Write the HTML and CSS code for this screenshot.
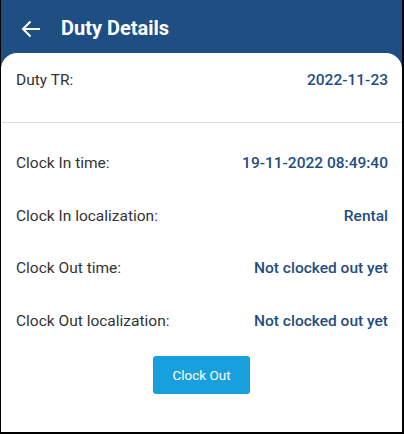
FILE: index.html
```html
<!DOCTYPE html>
<html lang="en">
  <head>
    <meta charset="UTF-8" />
    <meta name="viewport" content="width=device-width, initial-scale=1.0" />
    <title>Duty Details</title>
    <link rel="stylesheet" href="styles.css">
  </head>
  <body>
    <div class="screen">
      <header class="appbar">
        <svg class="back" width="20" height="18" viewBox="0 0 20 18">
          <path d="M19 9H2M9.5 1.5L2 9l7.5 7.5" fill="none" stroke="#fff" stroke-width="2" />
        </svg>
        <h1 class="title">Duty Details</h1>
      </header>
      <main class="card">
        <div class="row row-top">
          <span class="label">Duty TR:</span>
          <span class="value">2022-11-23</span>
        </div>
        <div class="divider"></div>
        <div class="details">
          <div class="row">
            <span class="label">Clock In time:</span>
            <span class="value">19-11-2022 08:49:40</span>
          </div>
          <div class="row">
            <span class="label">Clock In localization:</span>
            <span class="value">Rental</span>
          </div>
          <div class="row">
            <span class="label">Clock Out time:</span>
            <span class="value">Not clocked out yet</span>
          </div>
          <div class="row">
            <span class="label">Clock Out localization:</span>
            <span class="value">Not clocked out yet</span>
          </div>
        </div>
        <div class="actions">
          <button class="btn-clock">Clock Out</button>
        </div>
      </main>
    </div>
  </body>
</html>
```

FILE: styles.css
```css
html,
body {
  margin: 0;
  padding: 0;
  width: 100%;
  height: 100%;
  font-family: Roboto, "Liberation Sans", sans-serif;
  background-color: #fff;
}

/* cadre de l'ecran */
.screen {
  box-sizing: border-box;
  width: 404px;
  height: 434px;
  display: flex;
  flex-direction: column;
  background-color: #1f4e83;
  border-left: 1px solid #000;
  border-right: 2px solid #000;
  border-bottom: 2px solid #000;
}

.appbar {
  height: 53px;
  display: flex;
  align-items: center;
  padding-left: 20px;
  padding-top: 3px;
  box-sizing: border-box;
}

.back {
  display: block;
  margin-top: 1px;
}

.title {
  margin: 0 0 0 20px;
  color: #fff;
  font-size: 20px;
  font-weight: bold;
}

.card {
  flex: 1;
  background-color: #fff;
  border-radius: 16px 16px 0 0;
}

.row {
  display: flex;
  justify-content: space-between;
  align-items: center;
  padding: 0 14px 0 15px;
  line-height: 20px;
  font-size: 15.5px;
}

.row-top {
  padding-top: 17px;
}

.label {
  color: #333;
}

.value {
  color: #1f4e83;
  font-weight: 500;
}

.divider {
  height: 1px;
  background-color: #dedede;
  margin-top: 32px;
}

.details {
  display: flex;
  flex-direction: column;
  gap: 32.5px;
  padding-top: 30px;
}

.actions {
  display: flex;
  justify-content: center;
  margin-top: 25px;
}

.btn-clock {
  width: 97px;
  height: 38px;
  border: none;
  border-radius: 3px;
  background-color: #17a0dd;
  color: #fff;
  font-family: Roboto, "Liberation Sans", sans-serif;
  font-size: 13.5px;
  cursor: pointer;
}
```
